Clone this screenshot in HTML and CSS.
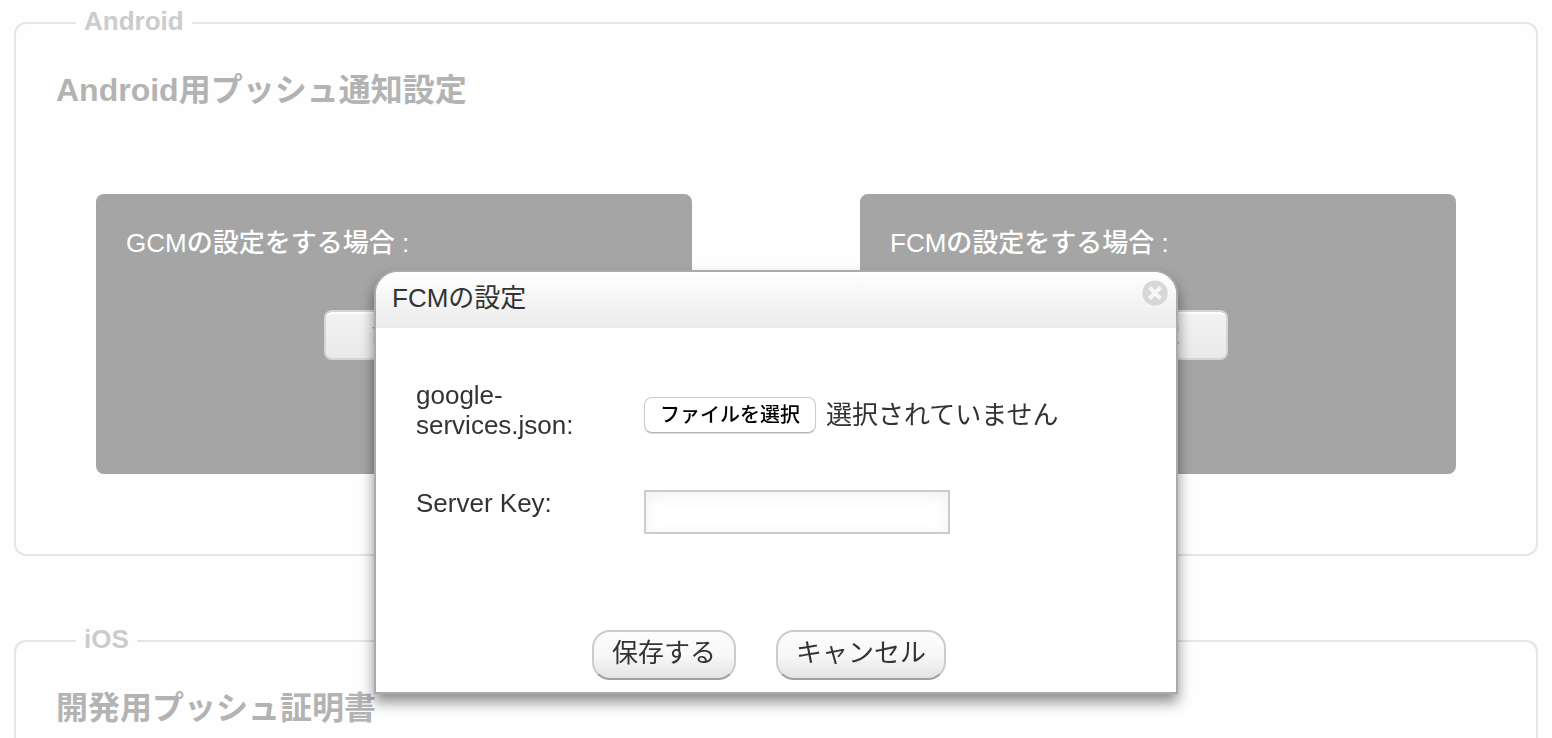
FILE: index.html
```html
<!DOCTYPE html>
<html lang="ja">
<head>
<meta charset="utf-8">
<meta name="viewport" content="width=device-width, initial-scale=1">
<title>FCMの設定</title>
<link rel="stylesheet" href="styles.css">
</head>
<body>
<main class="page">
  <fieldset class="section">
    <legend class="section-legend">Android</legend>
    <h2 class="section-title">Android用プッシュ通知設定</h2>
    <div class="cards">
      <section class="card">
        <h3 class="card-title">GCMの設定をする場合 :</h3>
        <button class="card-button" type="button">設定</button>
      </section>
      <section class="card">
        <h3 class="card-title">FCMの設定をする場合 :</h3>
        <button class="card-button" type="button">設定</button>
      </section>
    </div>
  </fieldset>
  <fieldset class="section">
    <legend class="section-legend">iOS</legend>
    <h2 class="section-title">開発用プッシュ証明書</h2>
  </fieldset>
</main>

<div class="dialog" role="dialog" aria-modal="true" aria-labelledby="dialog-title">
  <header class="dialog-header">
    <h1 class="dialog-title" id="dialog-title">FCMの設定</h1>
    <button class="dialog-close" type="button" aria-label="閉じる">
      <svg viewBox="0 0 26 26" width="26" height="26" aria-hidden="true">
        <circle cx="13" cy="13" r="12.6" fill="#d7d7d7"/>
        <path d="M7.4 7.4 18.6 18.6M18.6 7.4 7.4 18.6" fill="none" stroke="#f7f7f7" stroke-width="4"/>
      </svg>
    </button>
  </header>
  <form class="dialog-form">
    <div class="fields">
      <label class="field-label" for="services-file">google-services.json:</label>
      <div class="file-picker">
        <input class="file-input" type="file" id="services-file" accept=".json">
        <label class="file-button" for="services-file">ファイルを選択</label>
        <span class="file-status">選択されていません</span>
      </div>
      <label class="field-label" for="server-key">Server Key:</label>
      <input class="text-input" type="text" id="server-key">
    </div>
    <div class="actions">
      <button class="action-button" type="submit">保存する</button>
      <button class="action-button" type="button">キャンセル</button>
    </div>
  </form>
</div>
</body>
</html>
```

FILE: styles.css
```css
* {
  box-sizing: border-box;
}

body {
  margin: 0;
  height: 100vh;
  overflow: hidden;
  background: #fefefe;
  color: #333;
  font: 26px/30px "Liberation Sans", "Noto Sans CJK JP", sans-serif;
}

button,
input {
  font: inherit;
  color: inherit;
}

.page {
  display: flex;
  flex-direction: column;
  min-height: 100vh;
  padding: 6px 14px 0;
}

.section {
  min-width: 0;
  margin: 0 0 68px;
  padding: 30px 40px 80px;
  border: 2px solid #e5e5e5;
  border-radius: 12px;
}

.section:last-child {
  flex: 1;
  margin-bottom: 0;
  padding-bottom: 0;
  border-bottom: 0;
  border-radius: 12px 12px 0 0;
}

.section-legend {
  margin-left: 20px;
  padding: 0 8px 4px;
  color: #ccc;
  font-weight: bold;
}

.section-title {
  margin: 0 0 84px;
  color: #b3b3b3;
  font-size: 32px;
  line-height: 40px;
}

.section:last-child .section-title {
  margin-bottom: 0;
}

.cards {
  display: grid;
  grid-template-columns: 1fr 1fr;
  gap: 168px;
  padding: 0 40px;
}

.card {
  display: flex;
  flex-direction: column;
  min-height: 280px;
  padding: 34px 30px;
  border-radius: 8px;
  background: #a5a5a5;
}

.card-title {
  margin: 0 0 52px;
  color: #fff;
  font-size: 26px;
  font-weight: 500;
}

.card-button {
  align-self: center;
  width: 140px;
  height: 50px;
  padding: 0;
  border: 2px solid #d5d5d5;
  border-radius: 8px;
  background: linear-gradient(#f3f3f3, #eaeaea);
  box-shadow: inset 0 2px 0 #fff;
  color: #999;
  font-size: 22px;
}

.dialog {
  position: fixed;
  top: 270px;
  left: 50%;
  width: 804px;
  max-width: 100%;
  transform: translateX(-50%);
  border: 2px solid #aaa;
  border-radius: 24px 24px 0 0;
  background: #fff;
  box-shadow: 0 8px 14px rgba(0, 0, 0, 0.45);
}

.dialog-header {
  display: flex;
  align-items: flex-start;
  justify-content: space-between;
  height: 56px;
  padding: 8px 8px 0 16px;
  border-radius: 22px 22px 0 0;
  background: linear-gradient(#fff, #ebebeb);
}

.dialog-title {
  margin: 0;
  font-size: 26px;
  font-weight: normal;
  line-height: 36px;
}

.dialog-close {
  display: flex;
  padding: 0;
  border: 0;
  background: none;
}

.dialog-form {
  padding: 52px 40px 12px;
}

.fields {
  display: grid;
  grid-template-columns: 228px 1fr;
  row-gap: 48px;
}

.file-picker {
  position: relative;
  display: flex;
  align-items: center;
  gap: 10px;
  padding-top: 10px;
}

.file-input {
  position: absolute;
  width: 1px;
  height: 1px;
  opacity: 0;
}

.file-button {
  padding: 2px 15px;
  border: 1px solid #ccc;
  border-bottom-color: #b5b5b5;
  border-radius: 8px;
  background: #fff;
  box-shadow: 0 1px 1px rgba(0, 0, 0, 0.15);
  color: #000;
  font-size: 20px;
  font-weight: 500;
}

.text-input {
  width: 306px;
  height: 44px;
  margin-top: 2px;
  padding: 4px 8px;
  border: 2px solid #ccc;
  background: #fff;
  box-shadow: inset 0 4px 16px rgba(0, 0, 0, 0.06);
}

.actions {
  display: flex;
  justify-content: center;
  gap: 40px;
  margin-top: 96px;
  padding-right: 14px;
}

.action-button {
  height: 50px;
  padding: 0 18px 4px;
  border: 2px solid #ccc;
  border-bottom-color: #a0a0a0;
  border-radius: 18px;
  background: linear-gradient(#fdfdfd, #f8f8f8 50%, #e3e3e3);
}
```
